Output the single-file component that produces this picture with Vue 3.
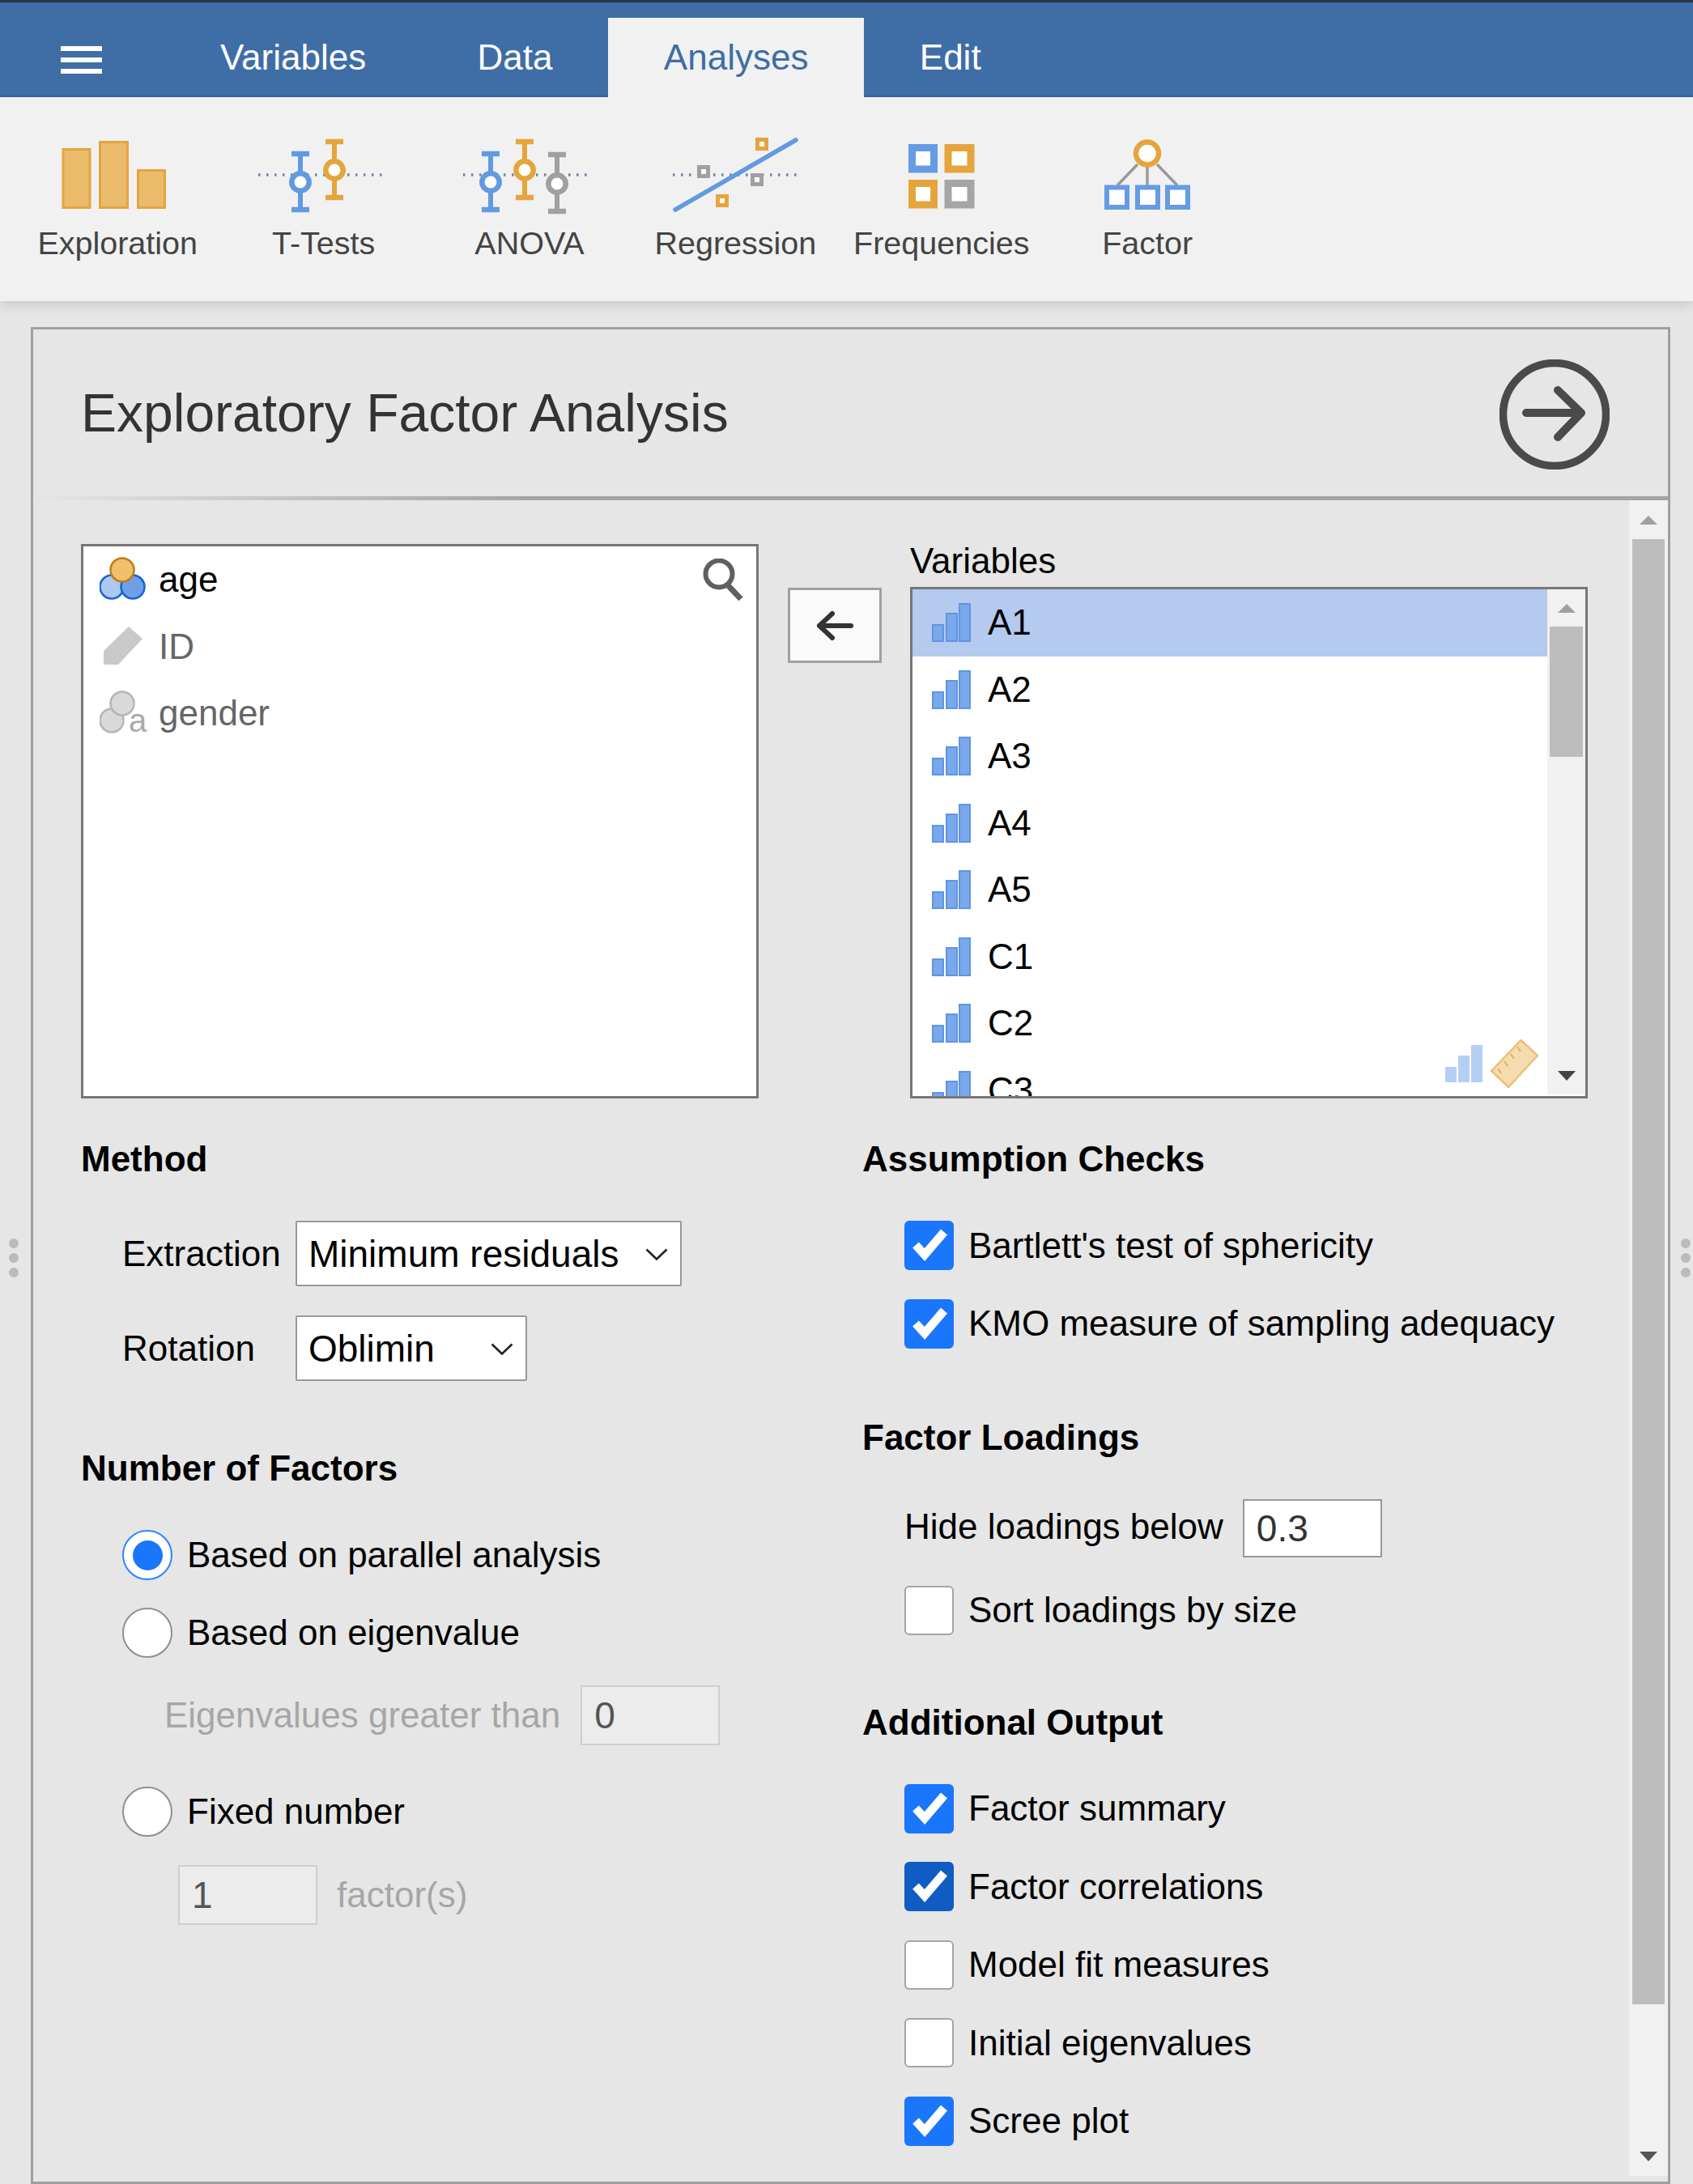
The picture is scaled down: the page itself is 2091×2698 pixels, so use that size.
<template>
  <div class="app">
    <div class="tabs">
      <div class="burger"><span></span><span></span><span></span></div>
      <div v-for="tab in tabs" :key="tab" :class="['tab', { active: tab === 'Analyses' }]">{{ tab }}</div>
    </div>

    <div class="ribbon">
      <div v-for="item in ribbon" :key="item.label" class="rib-btn">
        <svg class="rib-icon" viewBox="0 0 254 110" width="254" height="110">
          <template v-if="item.icon === 'bars'">
            <rect x="60" y="16.5" width="33" height="72" fill="#ebbb6c" stroke="#e5a53c" stroke-width="3" />
            <rect x="105.5" y="7.5" width="34" height="81" fill="#ebbb6c" stroke="#e5a53c" stroke-width="3" />
            <rect x="152.5" y="42.5" width="33" height="46" fill="#ebbb6c" stroke="#e5a53c" stroke-width="3" />
          </template>

          <line v-if="item.dots" :x1="item.dots[0]" y1="48" :x2="item.dots[1]" y2="48" class="dots" />

          <g v-for="bar in item.errors" :key="bar.x" :stroke="bar.color" fill="none">
            <line :x1="bar.x" :y1="bar.top" :x2="bar.x" :y2="bar.bottom" stroke-width="6" />
            <line :x1="bar.x - 11" :y1="bar.top + 3" :x2="bar.x + 11" :y2="bar.top + 3" stroke-width="6.5" />
            <line :x1="bar.x - 11" :y1="bar.bottom - 3" :x2="bar.x + 11" :y2="bar.bottom - 3" stroke-width="6.5" />
            <circle :cx="bar.x" :cy="bar.cy" r="10.7" stroke-width="6.5" fill="#fff" />
          </g>

          <template v-if="item.icon === 'regression'">
            <line x1="53" y1="91" x2="202" y2="5" stroke="#629ae0" stroke-width="5.5" stroke-linecap="round" />
            <rect x="154.5" y="4.5" width="11" height="11" class="sq" stroke="#e5a53c" />
            <rect x="105.5" y="74.5" width="11" height="11" class="sq" stroke="#e5a53c" />
            <rect x="82.5" y="38.5" width="11" height="11" class="sq" stroke="#a0a0a0" />
            <rect x="148.5" y="48.5" width="11" height="11" class="sq" stroke="#a0a0a0" />
          </template>

          <template v-if="item.icon === 'freq'">
            <rect x="90.5" y="14.5" width="27" height="26.5" class="sq9" stroke="#659ce4" />
            <rect x="135" y="14.5" width="28" height="26.5" class="sq9" stroke="#e5a53c" />
            <rect x="90.5" y="58.5" width="27" height="26.5" class="sq9" stroke="#e5a53c" />
            <rect x="135" y="58.5" width="28" height="26.5" class="sq9" stroke="#a5a5a5" />
          </template>

          <template v-if="item.icon === 'factor'">
            <g stroke="#999" stroke-width="3.5">
              <line x1="115" y1="35" x2="90" y2="61" />
              <line x1="127" y1="35" x2="127" y2="61" />
              <line x1="139" y1="35" x2="164" y2="61" />
            </g>
            <circle cx="127" cy="21.5" r="14" fill="#fff" stroke="#e5a53c" stroke-width="6.5" />
            <rect x="77" y="63.5" width="25" height="24.5" class="sq5" />
            <rect x="115" y="63.5" width="25" height="24.5" class="sq5" />
            <rect x="152" y="63.5" width="25" height="24.5" class="sq5" />
          </template>
        </svg>
        <div class="rib-label">{{ item.label }}</div>
      </div>
    </div>

    <div class="main">
      <div class="handle left"><i></i><i></i><i></i></div>
      <div class="handle right"><i></i><i></i><i></i></div>

      <div class="panel">
        <div class="panel-head">
          <div class="title">Exploratory Factor Analysis</div>
          <svg class="run" viewBox="0 0 136 136" width="136" height="136">
            <circle cx="68" cy="68" r="63.5" fill="none" stroke="#4a4a4a" stroke-width="9.5" />
            <path d="M33 66 H101 M72 38 L101 66 L72 96" fill="none" stroke="#4a4a4a" stroke-width="10" stroke-linecap="round" stroke-linejoin="round" />
          </svg>
        </div>
        <div class="head-line"></div>

        <div class="panel-body">
          <div class="content">
            <div class="supplier">
              <div class="source">
                <div class="rows">
                  <div v-for="v in sources" :key="v.name" :class="['row', 'src-row', v.cls]">
                    <svg class="src-icon" viewBox="0 0 60 60" width="60" height="60">
                      <template v-if="v.name === 'age'">
                        <circle cx="15" cy="39" r="14.5" fill="#adc9f2" stroke="#1465d2" stroke-width="2.5" />
                        <circle cx="41" cy="39" r="14.5" fill="#6fa0e6" stroke="#1465d2" stroke-width="2.5" />
                        <circle cx="28" cy="18" r="14.5" fill="#f1c06c" stroke="#c27c15" stroke-width="2.5" />
                      </template>
                      <polygon v-else-if="v.name === 'ID'" points="36,5 53,20 23,52 5,52 5,35" fill="#c9c9c9" />
                      <template v-else>
                        <circle cx="15" cy="39" r="14.5" fill="#d9d9d9" stroke="#b5b5b5" stroke-width="2.5" />
                        <circle cx="28" cy="18" r="14.5" fill="#d9d9d9" stroke="#b5b5b5" stroke-width="2.5" />
                        <text x="36" y="53" class="nominal-a">a</text>
                      </template>
                    </svg>
                    <span>{{ v.name }}</span>
                  </div>
                </div>
                <svg class="search" viewBox="0 0 52 52" width="52" height="52">
                  <circle cx="21" cy="19" r="16.5" fill="none" stroke="#5f5f5f" stroke-width="6" />
                  <line x1="32" y1="33" x2="48" y2="50" stroke="#5f5f5f" stroke-width="7" />
                </svg>
              </div>

              <div class="move">
                <svg viewBox="0 0 48 40" width="48" height="40">
                  <path d="M44 20 H5 M21 5 L5 20 L21 35" fill="none" stroke="#333" stroke-width="6" stroke-linecap="round" stroke-linejoin="round" />
                </svg>
              </div>

              <div class="target">
                <div class="target-label">Variables</div>
                <div class="target-list">
                  <div class="rows vars">
                    <div v-for="name in variables" :key="name" :class="['row', 'var-row', { selected: name === 'A1' }]">
                      <svg viewBox="0 0 48 48" width="48" height="48">
                        <rect x="1" y="27" width="13" height="20" class="ord" />
                        <rect x="18" y="13" width="13" height="34" class="ord" />
                        <rect x="34" y="1" width="13" height="46" class="ord" />
                      </svg>
                      <span>{{ name }}</span>
                    </div>
                  </div>
                  <div class="vscroll inner">
                    <div class="arrow-box small"><div class="tri up"></div></div>
                    <div class="thumb"></div>
                    <div class="spacer"></div>
                    <div class="arrow-box small"><div class="tri down"></div></div>
                  </div>
                  <svg class="measure-types" viewBox="0 0 116 60" width="116" height="60">
                    <rect x="1" y="34" width="14" height="19" fill="#b5cef4" />
                    <rect x="17" y="20" width="14" height="33" fill="#b5cef4" />
                    <rect x="33" y="7" width="14" height="46" fill="#b5cef4" />
                    <polygon points="94.5,1 115,20 79,59 58,39" fill="#f5dcae" stroke="#ebbf78" stroke-width="2.5" />
                    <path d="M90 9 l4 6 M82 18 l4 6 M74 27 l4 6 M66 36 l4 6" stroke="#ddb06a" stroke-width="2" fill="none" />
                  </svg>
                </div>
              </div>
            </div>

            <div class="options">
              <div class="col left-col">
                <div class="heading">Method</div>
                <div class="field first">
                  <span class="field-label">Extraction</span>
                  <div class="select wide">Minimum residuals<svg class="chev" viewBox="0 0 28 15" width="28" height="15"><path d="M1.5 1.5 L14 13.5 L26.5 1.5" fill="none" stroke="#222" stroke-width="2.6" /></svg></div>
                </div>
                <div class="field second">
                  <span class="field-label">Rotation</span>
                  <div class="select narrow">Oblimin<svg class="chev" viewBox="0 0 28 15" width="28" height="15"><path d="M1.5 1.5 L14 13.5 L26.5 1.5" fill="none" stroke="#222" stroke-width="2.6" /></svg></div>
                </div>

                <div class="heading factors">Number of Factors</div>
                <div class="radio r1"><span class="dot on"></span>Based on parallel analysis</div>
                <div class="radio r2"><span class="dot"></span>Based on eigenvalue</div>
                <div class="eigen">
                  <span>Eigenvalues greater than</span>
                  <div class="input off eigen-input">0</div>
                </div>
                <div class="radio r3"><span class="dot"></span>Fixed number</div>
                <div class="fixed">
                  <div class="input off fixed-input">1</div>
                  <span>factor(s)</span>
                </div>
              </div>

              <div class="col right-col">
                <div class="heading">Assumption Checks</div>
                <div class="checks first">
                  <div v-for="c in assumptions" :key="c.label" class="check">
                    <span :class="['box', c.state]">
                      <svg v-if="c.state" viewBox="0 0 61 61" width="61" height="61"><path d="M14 30 L25 42 L49 14" fill="none" stroke="#fff" stroke-width="10.5" /></svg>
                    </span>
                    {{ c.label }}
                  </div>
                </div>

                <div class="heading loadings">Factor Loadings</div>
                <div class="hide-row">
                  <span class="hide-label">Hide loadings below</span>
                  <div class="input hide-input">0.3</div>
                </div>
                <div class="check sort">
                  <span class="box"></span>
                  Sort loadings by size
                </div>

                <div class="heading additional">Additional Output</div>
                <div class="checks first">
                  <div v-for="c in outputs" :key="c.label" class="check">
                    <span :class="['box', c.state]">
                      <svg v-if="c.state" viewBox="0 0 61 61" width="61" height="61"><path d="M14 30 L25 42 L49 14" fill="none" stroke="#fff" stroke-width="10.5" /></svg>
                    </span>
                    {{ c.label }}
                  </div>
                </div>
              </div>
            </div>
          </div>

          <div class="vscroll outer">
            <div class="arrow-box"><div class="tri up"></div></div>
            <div class="thumb"></div>
            <div class="spacer"></div>
            <div class="arrow-box"><div class="tri down dark"></div></div>
          </div>
        </div>
      </div>
    </div>
  </div>
</template>

<script setup>
const tabs = ['Variables', 'Data', 'Analyses', 'Edit']

const blue = '#629ae0'
const orange = '#e5a53c'
const grey = '#a0a0a0'

const ribbon = [
  { label: 'Exploration', icon: 'bars' },
  {
    label: 'T-Tests',
    dots: [46, 200],
    errors: [
      { x: 98, top: 19, bottom: 94, cy: 57, color: blue },
      { x: 140, top: 4, bottom: 79, cy: 42, color: orange }
    ]
  },
  {
    label: 'ANOVA',
    dots: [45, 199],
    errors: [
      { x: 79, top: 19, bottom: 94, cy: 57, color: blue },
      { x: 121, top: 4, bottom: 79, cy: 42, color: orange },
      { x: 161, top: 20, bottom: 96, cy: 59, color: grey }
    ]
  },
  { label: 'Regression', icon: 'regression', dots: [50, 205] },
  { label: 'Frequencies', icon: 'freq' },
  { label: 'Factor', icon: 'factor' }
]

const sources = [
  { name: 'age', cls: 'on' },
  { name: 'ID', cls: 'muted' },
  { name: 'gender', cls: 'muted' }
]

const variables = ['A1', 'A2', 'A3', 'A4', 'A5', 'C1', 'C2', 'C3']

const assumptions = [
  { label: "Bartlett's test of sphericity", state: 'checked' },
  { label: 'KMO measure of sampling adequacy', state: 'checked' }
]

const outputs = [
  { label: 'Factor summary', state: 'checked' },
  { label: 'Factor correlations', state: 'checked deep' },
  { label: 'Model fit measures', state: '' },
  { label: 'Initial eigenvalues', state: '' },
  { label: 'Scree plot', state: 'checked' }
]
</script>

<style scoped>
.app {
  position: relative;
  width: 2091px;
  height: 2698px;
  overflow: hidden;
  display: flex;
  flex-direction: column;
  background: #e6e6e6;
  color: #000;
  font-family: "Liberation Sans", Arial, sans-serif;
  font-size: 44px;
}

/* top bar */
.tabs {
  height: 120px;
  box-sizing: border-box;
  flex: none;
  display: flex;
  align-items: flex-end;
  background: #3f6da5;
  border-top: 3px solid #26364d;
  border-bottom: 2px solid #33639d;
  color: #fff;
}

.burger {
  align-self: flex-start;
  width: 51px;
  margin: 54px 77.3px 0 75px;
  display: flex;
  flex-direction: column;
  gap: 8px;
}

.burger span {
  height: 6px;
  background: #fff;
}

.tab {
  height: 98px;
  margin-bottom: -2px;
  padding: 0 68.7px;
  display: flex;
  align-items: center;
}

.tab.active {
  background: #f1f1f1;
  color: #3f6da5;
}

/* analyses ribbon */
.ribbon {
  flex: none;
  height: 252px;
  position: relative;
  z-index: 2;
  display: flex;
  padding-left: 18px;
  background: #f1f1f1;
  box-shadow: 0 3px 16px rgba(0, 0, 0, 0.16);
  clip-path: inset(0 0 -30px 0);
}

.rib-btn {
  width: 254.4px;
  padding-top: 48px;
  display: flex;
  flex-direction: column;
  align-items: center;
}

.rib-icon {
  display: block;
}

.rib-label {
  font-size: 39.5px;
  color: #444;
}

.dots {
  stroke: #6d85a3;
  stroke-width: 3.5;
  stroke-dasharray: 2.5 7.5;
}

.sq {
  fill: #fff;
  stroke-width: 5;
}

.sq9 {
  fill: #fff;
  stroke-width: 9;
}

.sq5 {
  fill: #fff;
  stroke: #659ce4;
  stroke-width: 6;
}

/* options panel */
.main {
  flex: 1;
  min-height: 0;
  position: relative;
  padding: 32px 28px 0 38px;
  display: flex;
}

.handle {
  position: absolute;
  top: 1158px;
  display: flex;
  flex-direction: column;
  gap: 6px;
}

.handle.left {
  left: 11px;
}

.handle.right {
  left: 2076px;
}

.handle i {
  width: 12px;
  height: 12px;
  border-radius: 50%;
  background: #bbb;
}

.panel {
  flex: 1;
  min-width: 0;
  display: flex;
  flex-direction: column;
  border: 3px solid #a0a0a0;
}

.panel-head {
  height: 206px;
  flex: none;
  display: flex;
  align-items: center;
  justify-content: space-between;
  padding: 0 72px 0 59px;
}

.title {
  font-size: 66px;
  color: #333;
}

.run {
  display: block;
  margin-top: 3px;
}

.head-line {
  height: 5px;
  flex: none;
  background: linear-gradient(to right, #e6e6e6, #a5a5a5 30%);
}

.panel-body {
  flex: 1;
  min-height: 0;
  display: flex;
}

.content {
  flex: 1;
  min-width: 0;
  padding: 54px 0 0 59px;
}

.supplier {
  display: flex;
  align-items: flex-start;
}

.source {
  position: relative;
  width: 837px;
  height: 685px;
  box-sizing: border-box;
  border: 3px solid #777;
  background: #fff;
}

.rows {
  flex: 1;
  min-width: 0;
}

.row {
  height: 82.5px;
  display: flex;
  align-items: center;
}

.src-row {
  padding-left: 20px;
  gap: 13px;
}

.src-row.muted {
  color: #666;
}

.nominal-a {
  font-family: "Liberation Sans", Arial, sans-serif;
  font-size: 40px;
  fill: #aaa;
}

.search {
  position: absolute;
  top: 15px;
  left: 764px;
}

.move {
  width: 116px;
  height: 93px;
  margin: 54px 0 0 36px;
  box-sizing: border-box;
  border: 3px solid #a0a0a0;
  background: #fafafa;
  display: flex;
  align-items: center;
  justify-content: center;
}

.target {
  width: 837px;
  margin-left: 35px;
}

.target-label {
  height: 53px;
  line-height: 42px;
}

.target-list {
  position: relative;
  height: 632px;
  box-sizing: border-box;
  border: 3px solid #777;
  background: #fff;
  display: flex;
  overflow: hidden;
}

.vars {
  overflow: hidden;
}

.var-row {
  padding-left: 24px;
  gap: 21px;
}

.var-row.selected {
  background: #b4caee;
}

.ord {
  fill: #7aa8ea;
  stroke: #5e95e6;
  stroke-width: 2;
}

.measure-types {
  position: absolute;
  left: 657px;
  top: 556px;
}

/* scrollbars */
.vscroll {
  flex: none;
  display: flex;
  flex-direction: column;
  background: #f1f1f1;
}

.vscroll.outer {
  width: 48px;
  margin-bottom: 7px;
}

.vscroll.inner {
  width: 47px;
  margin-bottom: 2px;
}

.arrow-box {
  height: 48px;
  display: flex;
  align-items: center;
  justify-content: center;
  flex: none;
}

.arrow-box.small {
  height: 46px;
}

.thumb {
  flex: none;
  background: #bdbdbd;
}

.outer .thumb {
  height: 1810px;
  margin: 0 4px;
}

.inner .thumb {
  height: 161px;
  margin: 0 3px;
}

.spacer {
  flex: 1;
}

.tri {
  width: 0;
  height: 0;
  border-left: 11px solid transparent;
  border-right: 11px solid transparent;
}

.tri.up {
  border-bottom: 11px solid #a0a0a0;
}

.tri.down {
  border-top: 12px solid #444;
}

.tri.down.dark {
  border-top-color: #555;
}

/* option columns */
.options {
  display: flex;
  margin-top: 50px;
}

.left-col {
  width: 965px;
  flex: none;
}

.right-col {
  flex: 1;
}

.heading {
  height: 50px;
  line-height: 50px;
  font-weight: 700;
}

.heading.factors {
  margin-top: 83px;
}

.heading.loadings {
  margin-top: 85px;
}

.heading.additional {
  margin-top: 83px;
}

.field {
  display: flex;
  align-items: center;
  padding-left: 51px;
}

.field.first {
  margin-top: 51px;
}

.field.second {
  margin-top: 36px;
}

.field-label {
  width: 214px;
  flex: none;
}

.select {
  position: relative;
  height: 81px;
  box-sizing: border-box;
  border: 2px solid #999;
  border-radius: 2px;
  background: #fff;
  display: flex;
  align-items: center;
  padding-left: 14px;
  font-size: 46px;
}

.select.wide {
  width: 477px;
}

.select.narrow {
  width: 286px;
}

.chev {
  position: absolute;
  right: 15px;
  top: 32px;
}

.radio {
  height: 62px;
  display: flex;
  align-items: center;
  gap: 18px;
  padding-left: 51px;
}

.radio.r1 {
  margin-top: 51px;
}

.radio.r2 {
  margin-top: 34px;
}

.radio.r3 {
  margin-top: 51px;
}

.dot {
  position: relative;
  width: 62px;
  height: 62px;
  flex: none;
  box-sizing: border-box;
  border: 2px solid #8f8f8f;
  border-radius: 50%;
  background: #fff;
}

.dot.on {
  border-color: #2a85ff;
}

.dot.on::after {
  content: "";
  position: absolute;
  inset: 10.5px;
  border-radius: 50%;
  background: #1a76fb;
}

.eigen {
  margin-top: 34px;
  padding-left: 103px;
  display: flex;
  align-items: center;
  color: #a6a6a6;
}

.input {
  box-sizing: border-box;
  border: 2px solid #999;
  background: #fff;
  display: flex;
  align-items: center;
  padding-left: 15px;
  font-size: 46px;
  color: #333;
}

.input.off {
  height: 74px;
  width: 172px;
  background: #ececec;
  border-color: #cfcfcf;
  color: #555;
}

.eigen-input {
  margin-left: 25px;
}

.fixed {
  margin-top: 35px;
  padding-left: 120px;
  display: flex;
  align-items: center;
  gap: 24px;
  color: #a6a6a6;
}

.checks {
  display: flex;
  flex-direction: column;
  gap: 35.6px;
}

.checks.first {
  margin-top: 51px;
}

.check {
  height: 61px;
  display: flex;
  align-items: center;
  gap: 18px;
  padding-left: 52px;
}

.check.sort {
  margin-top: 35px;
}

.box {
  width: 61px;
  height: 61px;
  flex: none;
  box-sizing: border-box;
  border: 2px solid #a5a5a5;
  border-radius: 6px;
  background: #fff;
  position: relative;
}

.box.checked {
  border: none;
  background: #1a76fb;
}

.box.deep {
  background: #0f5dc2;
}

.box svg {
  display: block;
}

.hide-row {
  margin-top: 51px;
  padding-left: 52px;
  display: flex;
  align-items: center;
  gap: 24px;
}

.hide-label {
  padding-bottom: 4px;
}

.hide-input {
  width: 172px;
  height: 72px;
}
</style>

<style>
html,
body {
  margin: 0;
  background: #e6e6e6;
}
</style>
